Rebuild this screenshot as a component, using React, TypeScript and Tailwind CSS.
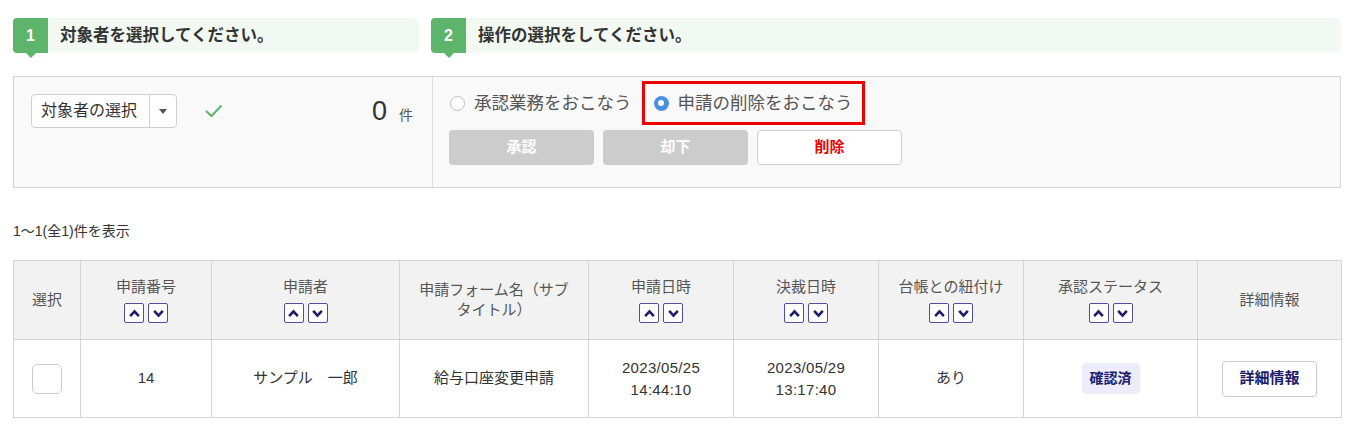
import { useState } from "react";

type Col = { label: string; sortable: boolean; width: number };

const cols: Col[] = [
  { label: "選択", sortable: false, width: 67 },
  { label: "申請番号", sortable: true, width: 131 },
  { label: "申請者", sortable: true, width: 188 },
  { label: "申請フォーム名（サブタイトル）", sortable: false, width: 189 },
  { label: "申請日時", sortable: true, width: 145 },
  { label: "決裁日時", sortable: true, width: 145 },
  { label: "台帳との紐付け", sortable: true, width: 145 },
  { label: "承認ステータス", sortable: true, width: 174 },
  { label: "詳細情報", sortable: false, width: 144 },
];

function Step({ num, title, className }: { num: string; title: string; className: string }) {
  return (
    <div className={`relative flex h-[35px] ${className}`}>
      <div className="flex w-[35px] items-center justify-center rounded-l-[4px] bg-[#5cb56b] text-[16px] font-bold text-white">
        {num}
      </div>
      <div className="absolute left-[13px] top-[35px] h-0 w-0 border-x-[5px] border-t-[5px] border-x-transparent border-t-[#5cb56b]" />
      <div className="flex flex-1 items-center rounded-r-[6px] bg-[#f2f9f3] pl-[12px] text-[16.5px] font-bold text-[#333]">
        {title}
      </div>
    </div>
  );
}

function SortButtons() {
  return (
    <div className="mt-[6px] flex justify-center gap-[4px]">
      <button className="flex h-[20px] w-[20px] items-center justify-center rounded-[2px] border-[1.5px] border-[#4f4f9e] bg-white">
        <svg width="13" height="13" viewBox="0 0 12 12">
          <polyline points="2,8.5 6,4 10,8.5" fill="none" stroke="#1c1c6b" strokeWidth="2.4" />
        </svg>
      </button>
      <button className="flex h-[20px] w-[20px] items-center justify-center rounded-[2px] border-[1.5px] border-[#4f4f9e] bg-white">
        <svg width="13" height="13" viewBox="0 0 12 12">
          <polyline points="2,3.5 6,8 10,3.5" fill="none" stroke="#1c1c6b" strokeWidth="2.4" />
        </svg>
      </button>
    </div>
  );
}

function Radio({ checked }: { checked: boolean }) {
  return (
    <span
      className={`flex h-[15px] w-[15px] shrink-0 items-center justify-center rounded-full ${
        checked ? "bg-[#4a90e2]" : "border border-[#bdbdbd] bg-white"
      }`}
    >
      {checked && <span className="h-[6px] w-[6px] rounded-full bg-white" />}
    </span>
  );
}

export default function App() {
  const [mode, setMode] = useState<"approve" | "delete">("delete");

  return (
    <div className="min-h-[439px] bg-white pl-[13px] pr-[19px] pt-[18px] font-['Liberation_Sans','Noto_Sans_CJK_JP',sans-serif]">
      <div className="flex gap-[12px]">
        <Step num="1" title="対象者を選択してください。" className="w-[406px]" />
        <Step num="2" title="操作の選択をしてください。" className="flex-1" />
      </div>

      <div className="mt-[23px] flex h-[112px] border border-[#d6d6d6] bg-[#f9f9f9]">
        <div className="flex w-[419px] items-start border-r border-[#dcdcdc] pl-[17px] pr-[19px] pt-[17px]">
          <div className="flex h-[34px] w-[146px] rounded-[4px] border border-[#cfcfcf] bg-white">
            <div className="flex flex-1 items-center pl-[9px] text-[16px] text-[#333]">対象者の選択</div>
            <div className="flex w-[27px] items-center justify-center border-l border-[#cfcfcf]">
              <div className="h-0 w-0 border-x-[4.5px] border-t-[5px] border-x-transparent border-t-[#555]" />
            </div>
          </div>
          <svg className="ml-[27px] mt-[9px]" width="20" height="16" viewBox="0 0 20 16">
            <polyline points="2,8 7.5,13 17.5,2.5" fill="none" stroke="#5cb56b" strokeWidth="2" />
          </svg>
          <div className="ml-auto flex items-baseline gap-[12px] text-[#333]">
            <span className="text-[27px] leading-[34px]">0</span>
            <span className="text-[14px] text-[#555]">件</span>
          </div>
        </div>

        <div className="flex flex-1 flex-col pl-[16px] pt-[4px]">
          <div className="flex h-[44px] items-center">
            <label className="flex cursor-pointer items-center gap-[9px] pl-[1px]" onClick={() => setMode("approve")}>
              <Radio checked={mode === "approve"} />
              <span className="text-[17.5px] text-[#555]">承認業務をおこなう</span>
            </label>
            <label
              className="ml-[10px] flex h-[44px] cursor-pointer items-center gap-[9px] border-[3px] border-[#ee0000] px-[9px]"
              onClick={() => setMode("delete")}
            >
              <Radio checked={mode === "delete"} />
              <span className="text-[17.5px] text-[#555]">申請の削除をおこなう</span>
            </label>
          </div>
          <div className="mt-[5px] flex gap-[9px]">
            <button className="h-[35px] w-[145px] rounded-[4px] bg-[#cccccc] text-[15px] font-bold text-white">承認</button>
            <button className="h-[35px] w-[145px] rounded-[4px] bg-[#cccccc] text-[15px] font-bold text-white">却下</button>
            <button className="h-[35px] w-[145px] rounded-[4px] border border-[#cfcfcf] bg-white text-[15px] font-bold text-[#ee0000]">
              削除
            </button>
          </div>
        </div>
      </div>

      <p className="mt-[34px] text-[14px] leading-[19px] text-[#333]">1〜1(全1)件を表示</p>

      <table className="mt-[19px] w-full table-fixed border-collapse text-[15px]">
        <colgroup>
          {cols.map((c) => (
            <col key={c.label} style={{ width: c.width }} />
          ))}
        </colgroup>
        <thead>
          <tr className="h-[79px] bg-[#f2f2f2]">
            {cols.map((c) => (
              <th key={c.label} className="border border-[#d4d4d4] px-[14px] text-center font-normal leading-[20px] text-[#555]">
                {c.label}
                {c.sortable && <SortButtons />}
              </th>
            ))}
          </tr>
        </thead>
        <tbody>
          <tr className="h-[78px] text-center text-[#333]">
            <td className="border border-[#d4d4d4]">
              <input type="checkbox" className="h-[30px] w-[30px] appearance-none rounded-[5px] border border-[#cccccc] bg-white align-middle" />
            </td>
            <td className="border border-[#d4d4d4] text-[15px]">14</td>
            <td className="border border-[#d4d4d4]">サンプル　一郎</td>
            <td className="border border-[#d4d4d4]">給与口座変更申請</td>
            <td className="border border-[#d4d4d4] leading-[22px] tracking-[0.02em]">
              2023/05/25
              <br />
              14:44:10
            </td>
            <td className="border border-[#d4d4d4] leading-[22px] tracking-[0.02em]">
              2023/05/29
              <br />
              13:17:40
            </td>
            <td className="border border-[#d4d4d4]">あり</td>
            <td className="border border-[#d4d4d4]">
              <span className="inline-block rounded-[4px] bg-[#ececfb] px-[8px] py-[5px] text-[14px] font-bold text-[#1c1c6b]">確認済</span>
            </td>
            <td className="border border-[#d4d4d4]">
              <button className="h-[36px] w-[95px] rounded-[4px] border border-[#cccccc] bg-white text-[15px] font-bold text-[#1c1c6b]">
                詳細情報
              </button>
            </td>
          </tr>
        </tbody>
      </table>
    </div>
  );
}
